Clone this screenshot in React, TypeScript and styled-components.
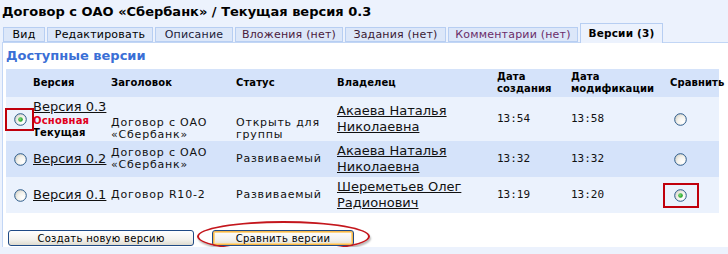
import styled, { createGlobalStyle } from "styled-components";

const GlobalStyle = createGlobalStyle`
  html, body {
    margin: 0;
    padding: 0;
    background: #ecf2fd;
    overflow: hidden;
  }
  body {
    font-family: "DejaVu Sans", Verdana, sans-serif;
    font-size: 11px;
    color: #000;
  }
`;

const Page = styled.div`
  padding-left: 2px;
  width: 726px;
`;

const Title = styled.h1`
  margin: 0;
  height: 26px;
  padding: 4px 0 0 0;
  box-sizing: border-box;
  font-size: 13px;
  line-height: 16px;
  font-weight: bold;
  color: #000;
  white-space: nowrap;
`;

const Tabs = styled.div`
  display: flex;
  align-items: flex-end;
  gap: 2px;
  height: 16px;
  padding-left: 1px;
  position: relative;
  z-index: 1;
`;

const Tab = styled.div<{ $w: number; $active?: boolean; $color?: string }>`
  box-sizing: border-box;
  width: ${(p) => p.$w}px;
  height: ${(p) => (p.$active ? 20 : 15)}px;
  margin-bottom: ${(p) => (p.$active ? -1 : 0)}px;
  display: flex;
  align-items: center;
  justify-content: center;
  border: 1px solid #b7cef2;
  border-bottom: ${(p) => (p.$active ? "none" : "1px solid #b7cef2")};
  background: ${(p) => (p.$active ? "#ecf2fd" : "#dce7f9")};
  color: ${(p) => p.$color || "#000"};
  font-size: ${(p) => (p.$active ? 10.5 : 11)}px;
  font-weight: ${(p) => (p.$active ? "bold" : "normal")};
  letter-spacing: 0.2px;
  padding-bottom: ${(p) => (p.$active ? 2 : 0)}px;
  white-space: nowrap;
`;

const Panel = styled.div`
  background: #fff;
  border-top: 1px solid #c2d6f5;
  border-left: 1px solid #c2d6f5;
  padding: 4px 0 0 3px;
  min-height: 200px;
`;

const Heading = styled.h2`
  margin: 0 0 4px 0;
  font-size: 13px;
  line-height: 18px;
  font-weight: bold;
  color: #3a6fd6;
`;

const Table = styled.table`
  width: 713px;
  border-collapse: collapse;
  table-layout: fixed;
`;

const HeadRow = styled.tr`
  height: 28px;
  background: #d5e3fa;
`;

const Th = styled.th`
  padding: 0 0 0 2px;
  text-align: left;
  vertical-align: middle;
  font-size: 10px;
  line-height: 12px;
  letter-spacing: 0.1px;
  font-weight: bold;
  white-space: nowrap;
`;

const Row = styled.tr<{ $h: number; $dark?: boolean }>`
  height: ${(p) => p.$h}px;
  background: ${(p) => (p.$dark ? "#d5e3fa" : "#ebf2fd")};
`;

const Td = styled.td<{ $bottom?: boolean; $pl?: number }>`
  padding: 0 0 0 ${(p) => p.$pl ?? 2}px;
  vertical-align: ${(p) => (p.$bottom ? "bottom" : "middle")};
  font-size: 11px;
  line-height: 12px;
  letter-spacing: 0.8px;
  color: #111;
  white-space: nowrap;
`;

const Link = styled.a`
  font-size: 13px;
  line-height: 16px;
  letter-spacing: 0;
  color: #111;
  text-decoration: underline;
  cursor: pointer;
`;

const Badge = styled.div<{ $red?: boolean }>`
  font-size: 10px;
  line-height: 12px;
  letter-spacing: 0.2px;
  font-weight: bold;
  color: ${(p) => (p.$red ? "#e0001b" : "#000")};
`;

const Time = styled.span`
  font-family: "DejaVu Sans Mono", "Liberation Mono", monospace;
  font-size: 11px;
  letter-spacing: 0;
  color: #111;
`;

const RadioWrap = styled.span`
  position: relative;
  display: inline-block;
  width: 13px;
  height: 13px;
  vertical-align: middle;
`;

const Highlight = styled.span<{
  $l: number;
  $t: number;
  $w: number;
  $h: number;
}>`
  position: absolute;
  left: ${(p) => p.$l}px;
  top: ${(p) => p.$t}px;
  width: ${(p) => p.$w}px;
  height: ${(p) => p.$h}px;
  box-sizing: border-box;
  border: 2px solid #c0000c;
`;

const Buttons = styled.div`
  display: flex;
  gap: 18px;
  margin: 17px 0 0 2px;
`;

const ButtonBox = styled.span`
  position: relative;
  display: inline-block;
`;

const Button = styled.button<{ $w: number; $hot?: boolean }>`
  box-sizing: border-box;
  width: ${(p) => p.$w}px;
  height: 16px;
  padding: 0;
  border: 1px solid #1f4a86;
  border-radius: 3px;
  background: linear-gradient(#ffffff, #f3f2ee 60%, #dedbd0);
  box-shadow: ${(p) =>
    p.$hot ? "inset 0 0 0 1px #f7b748, inset 0 0 0 2px #fcd68a" : "none"};
  font-family: "DejaVu Sans", Verdana, sans-serif;
  font-size: 10px;
  line-height: 13px;
  letter-spacing: 0.3px;
  color: #000;
  cursor: pointer;
`;

const Ellipse = styled.span`
  position: absolute;
  left: -15px;
  top: -9px;
  width: 173px;
  height: 31px;
  box-sizing: border-box;
  border: 2px solid #c4161c;
  border-radius: 50%;
  box-shadow: 1px 2px 2px rgba(0, 0, 0, 0.28);
  pointer-events: none;
`;

const Radio = ({ checked }: { checked?: boolean }) => (
  <svg width="13" height="13" viewBox="0 0 13 13" style={{ display: "block" }}>
    <defs>
      <radialGradient id="rg" cx="0.7" cy="0.7" r="0.8">
        <stop offset="0" stopColor="#ffffff" />
        <stop offset="0.55" stopColor="#f3f2ec" />
        <stop offset="1" stopColor="#d4d1c6" />
      </radialGradient>
      <radialGradient id="dot" cx="0.4" cy="0.4" r="0.6">
        <stop offset="0" stopColor="#7be07b" />
        <stop offset="1" stopColor="#1a9a1a" />
      </radialGradient>
    </defs>
    <circle cx="6.5" cy="6.5" r="5.8" fill="url(#rg)" stroke="#2b5a8a" strokeWidth="1" />
    {checked && <circle cx="6.5" cy="6.5" r="2.3" fill="url(#dot)" />}
  </svg>
);

type Version = {
  name: string;
  title: string[];
  status: string[];
  owner: string[];
  created: string;
  modified: string;
  h: number;
  main?: boolean;
  compare?: boolean;
};

const versions: Version[] = [
  {
    name: "Версия 0.3",
    title: ["Договор с ОАО", "«Сбербанк»"],
    status: ["Открыть для", "группы"],
    owner: ["Акаева Наталья", "Николаевна"],
    created: "13:54",
    modified: "13:58",
    h: 44,
    main: true,
  },
  {
    name: "Версия 0.2",
    title: ["Договор с ОАО", "«Сбербанк»"],
    status: ["Развиваемый"],
    owner: ["Акаева Наталья", "Николаевна"],
    created: "13:32",
    modified: "13:32",
    h: 36,
  },
  {
    name: "Версия 0.1",
    title: ["Договор R10-2"],
    status: ["Развиваемый"],
    owner: ["Шереметьев Олег", "Радионович"],
    created: "13:19",
    modified: "13:20",
    h: 36,
    compare: true,
  },
];

const tabs = [
  { label: "Вид", w: 42 },
  { label: "Редактировать", w: 106 },
  { label: "Описание", w: 78, color: "#1c1c3a" },
  { label: "Вложения (нет)", w: 108, color: "#4a1a3c" },
  { label: "Задания (нет)", w: 101, color: "#3a1a34" },
  { label: "Комментарии (нет)", w: 130, color: "#6a2d6a" },
];

const cols = [25, 78, 125, 101, 160, 74, 99, 51];

export default function App() {
  return (
    <>
      <GlobalStyle />
      <Page>
        <Title>Договор с ОАО «Сбербанк» / Текущая версия 0.3</Title>
        <Tabs>
          {tabs.map((t) => (
            <Tab key={t.label} $w={t.w} $color={t.color}>
              {t.label}
            </Tab>
          ))}
          <Tab $w={83} $active>
            Версии (3)
          </Tab>
        </Tabs>
        <Panel>
          <Heading>Доступные версии</Heading>
          <Table>
            <colgroup>
              {cols.map((w, i) => (
                <col key={i} style={{ width: w }} />
              ))}
            </colgroup>
            <thead>
              <HeadRow>
                <Th />
                <Th>Версия</Th>
                <Th>Заголовок</Th>
                <Th>Статус</Th>
                <Th>Владелец</Th>
                <Th>
                  Дата
                  <br />
                  создания
                </Th>
                <Th>
                  Дата
                  <br />
                  модификации
                </Th>
                <Th>Сравнить</Th>
              </HeadRow>
            </thead>
            <tbody>
              {versions.map((v, i) => (
                <Row key={v.name} $h={v.h} $dark={i % 2 === 1}>
                  <Td $pl={8}>
                    <RadioWrap>
                      <Radio checked={v.main} />
                      {v.main && <Highlight $l={-9} $t={-5} $w={29} $h={23} />}
                    </RadioWrap>
                  </Td>
                  <Td>
                    <Link>{v.name}</Link>
                    {v.main && (
                      <>
                        <Badge $red>Основная</Badge>
                        <Badge>Текущая</Badge>
                      </>
                    )}
                  </Td>
                  <Td $bottom={v.main}>
                    {v.title.map((l) => (
                      <div key={l}>{l}</div>
                    ))}
                  </Td>
                  <Td $bottom={v.main}>
                    {v.status.map((l) => (
                      <div key={l}>{l}</div>
                    ))}
                  </Td>
                  <Td>
                    {v.owner.map((l) => (
                      <div key={l}>
                        <Link>{l}</Link>
                      </div>
                    ))}
                  </Td>
                  <Td>
                    <Time>{v.created}</Time>
                  </Td>
                  <Td>
                    <Time>{v.modified}</Time>
                  </Td>
                  <Td $pl={6}>
                    <RadioWrap>
                      <Radio checked={v.compare} />
                      {v.compare && (
                        <Highlight $l={-11} $t={-6} $w={36} $h={25} />
                      )}
                    </RadioWrap>
                  </Td>
                </Row>
              ))}
            </tbody>
          </Table>
          <Buttons>
            <Button $w={186}>Создать новую версию</Button>
            <ButtonBox>
              <Button $w={142} $hot>
                Сравнить версии
              </Button>
              <Ellipse />
            </ButtonBox>
          </Buttons>
        </Panel>
      </Page>
    </>
  );
}
